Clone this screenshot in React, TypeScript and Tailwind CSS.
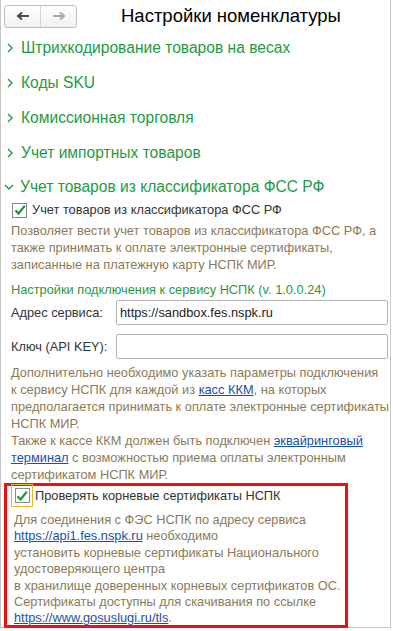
import React from "react"

const font = { fontFamily: '"Liberation Sans", Arial, sans-serif' }

const Chevron = ({ open = false }: { open?: boolean }) => (
  <svg width="10" height="12" viewBox="0 0 10 12" className="shrink-0">
    {open ? (
      <path d="M1 4 L5 8 L9 4" fill="none" stroke="#1f9a44" strokeWidth="1.4" />
    ) : (
      <path d="M3 2 L7 6 L3 10" fill="none" stroke="#1f9a44" strokeWidth="1.4" />
    )}
  </svg>
)

const CheckBox = () => (
  <div className="flex h-[15px] w-[15px] shrink-0 items-center justify-center border border-[#8a8a8a] bg-white">
    <svg width="12" height="12" viewBox="0 0 12 12">
      <path d="M1.5 6.2 L4.5 9.5 L10.8 1.8" fill="none" stroke="#1b9a3a" strokeWidth="2.2" />
    </svg>
  </div>
)

const Group = ({ title }: { title: string }) => (
  <div className="flex h-[35px] items-center gap-[6px] pl-[4px] text-[15.6px] text-[#1f9a44]">
    <Chevron />
    <span>{title}</span>
  </div>
)

const Link = ({ children }: { children: React.ReactNode }) => (
  <span className="text-[#1a4fa8] underline">{children}</span>
)

export default function App() {
  return (
    <div style={font} className="h-[631px] w-[393px] overflow-hidden bg-white">
      <div className="h-[628px] w-[391px] border border-t-0 border-[#c6c6c6]">
        {/* header */}
        <div className="flex h-[30px] items-center pt-[2px]">
          <div className="ml-[3px] flex h-[23px] w-[73px] overflow-hidden rounded-[3px] border border-[#bdbdbd] bg-gradient-to-b from-white to-[#f1f1f1]">
            <div className="flex w-[36px] items-center justify-center border-r border-[#d4d4d4]">
              <svg width="14" height="10" viewBox="0 0 14 10">
                <path d="M13 5 H3 M6 1.5 L2 5 L6 8.5" fill="none" stroke="#4a4a4a" strokeWidth="2" />
              </svg>
            </div>
            <div className="flex flex-1 items-center justify-center">
              <svg width="14" height="10" viewBox="0 0 14 10">
                <path d="M1 5 H11 M8 1.5 L12 5 L8 8.5" fill="none" stroke="#a8a8a8" strokeWidth="2" />
              </svg>
            </div>
          </div>
          <div className="ml-[44px] text-[18.5px] text-black">Настройки номенклатуры</div>
        </div>

        <Group title="Штрихкодирование товаров на весах" />
        <Group title="Коды SKU" />
        <Group title="Комиссионная торговля" />
        <Group title="Учет импортных товаров" />

        <div className="flex h-[32px] items-center gap-[6px] pl-[3px] pt-[2px] text-[15.6px] text-[#1f9a44]">
          <Chevron open />
          <span>Учет товаров из классификатора ФСС РФ</span>
        </div>

        <div className="flex h-[16px] items-center gap-[5px] pl-[11px] text-[12.8px] text-[#333]">
          <CheckBox />
          <span>Учет товаров из классификатора ФСС РФ</span>
        </div>

        <div className="mt-[4px] whitespace-nowrap pl-[10px] text-[12.8px] leading-[17px] text-[#8c7a57]">
          Позволяет вести учет товаров из классификатора ФСС РФ, а
          <br />
          также принимать к оплате электронные сертификаты,
          <br />
          записанные на платежную карту НСПК МИР.
        </div>

        <div className="mt-[8px] pl-[10px] text-[12.8px] leading-[17px] text-[#1f9a44]">
          Настройки подключения к сервису НСПК (v. 1.0.0.24)
        </div>

        <div className="mt-[2px] flex items-center pl-[10px] pr-[2px] text-[12.8px] text-[#333]">
          <span className="w-[105px]">Адрес сервиса:</span>
          <div className="flex h-[25px] flex-1 items-center rounded-[2px] border border-[#b4b4b4] px-[3px] text-[#222]">
            https://sandbox.fes.nspk.ru
          </div>
        </div>
        <div className="mt-[9px] flex items-center pl-[10px] pr-[2px] text-[12.8px] text-[#333]">
          <span className="w-[105px]">Ключ (API KEY):</span>
          <div className="h-[25px] flex-1 rounded-[2px] border border-[#b4b4b4]" />
        </div>

        <div className="mt-[5px] whitespace-nowrap pl-[10px] text-[12.8px] leading-[17px] text-[#8c7a57]">
          Дополнительно необходимо указать параметры подключения
          <br />
          к сервису НСПК для каждой из <Link>касс ККМ</Link>, на которых
          <br />
          предполагается принимать к оплате электронные сертификаты
          <br />
          НСПК МИР.
          <br />
          Также к кассе ККМ должен быть подключен <Link>эквайринговый</Link>
          <br />
          <Link>терминал</Link> с возможностью приема оплаты электронным
          <br />
          сертификатом НСПК МИР.
        </div>

        <div className="ml-[3px] h-[145px] w-[344px] border-[3px] border-[#ee1111]">
          <div className="-mt-[2px] flex items-center gap-[2px] pl-[4px] text-[12.8px] text-[#333]">
            <div className="flex h-[23px] w-[22px] items-center justify-center border border-[#e8b830]">
              <CheckBox />
            </div>
            <span>Проверять корневые сертификаты НСПК</span>
          </div>
          <div className="mt-[5px] whitespace-nowrap pl-[7px] text-[12.8px] leading-[16.4px] text-[#8c7a57]">
            Для соединения с ФЭС НСПК по адресу сервиса
            <br />
            <Link>https://api1.fes.nspk.ru</Link> необходимо
            <br />
            установить корневые сертификаты Национального
            <br />
            удостоверяющего центра
            <br />
            в хранилище доверенных корневых сертификатов ОС.
            <br />
            Сертификаты доступны для скачивания по ссылке
            <br />
            <Link>https://www.gosuslugi.ru/tls</Link>.
          </div>
        </div>
      </div>
    </div>
  )
}
